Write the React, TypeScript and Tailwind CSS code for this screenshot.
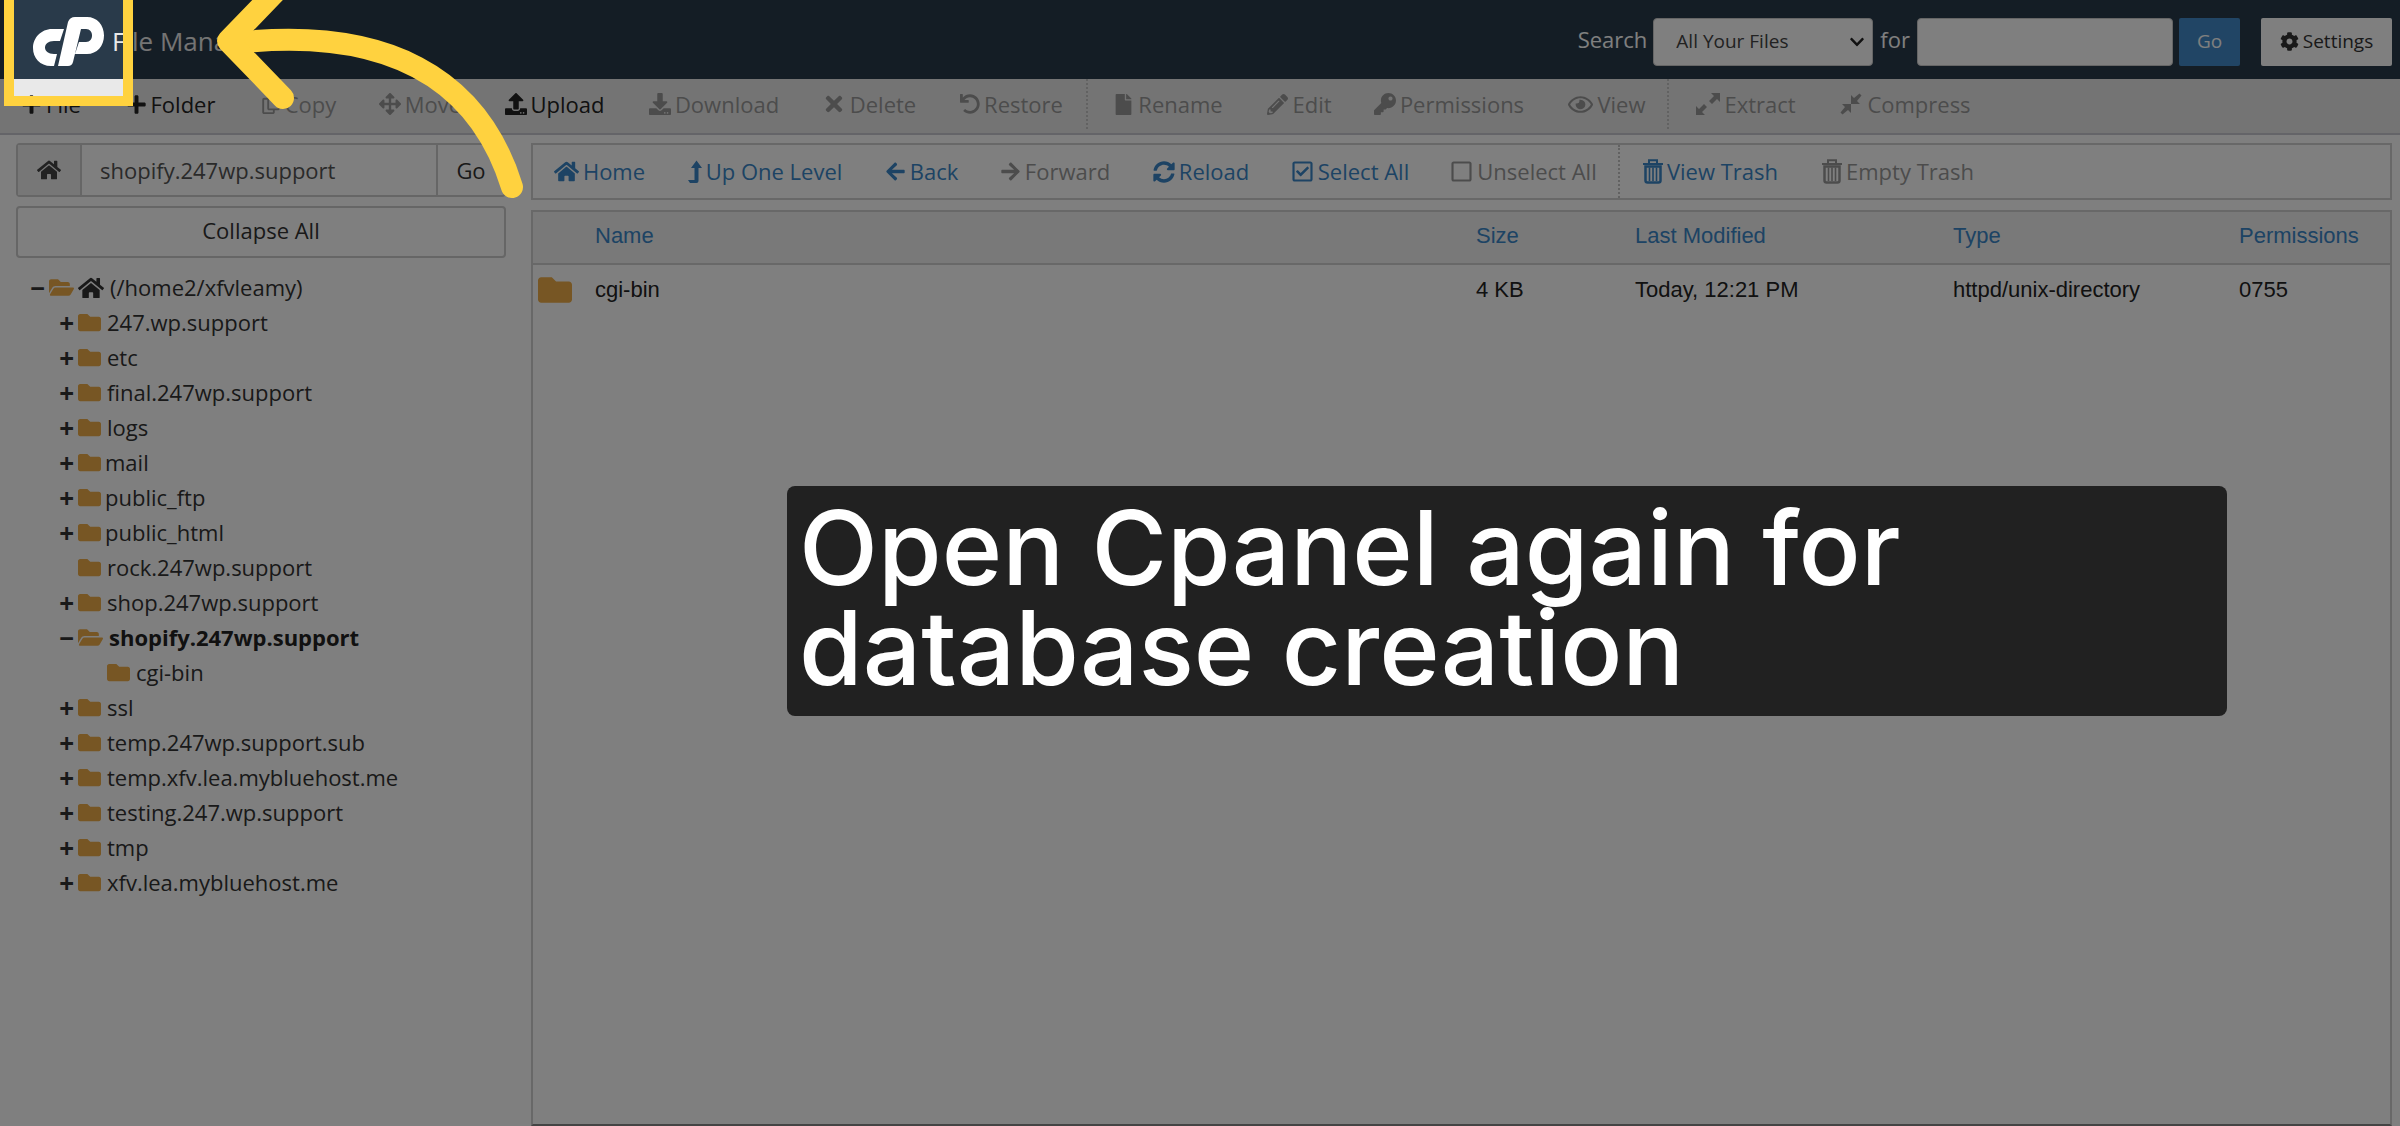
import React from 'react';
import {
  FaArrowLeft,
  FaArrowRight,
  FaArrowsAlt,
  FaChevronDown,
  FaCog,
  FaDownload,
  FaFile,
  FaFolder,
  FaFolderOpen,
  FaHome,
  FaKey,
  FaPencilAlt,
  FaPlus,
  FaRegCheckSquare,
  FaRegCopy,
  FaRegEye,
  FaRegSquare,
  FaSyncAlt,
  FaTimes,
  FaUndo,
  FaUpload,
} from 'react-icons/fa';

interface Action {
  label: string;
  icon: React.ReactNode;
  width: string;
  disabled?: boolean;
  divider?: boolean;
}

const TrashIcon = () => (
  <svg viewBox="0 0 20 25" className="h-[25px] w-5" fill="none" stroke="currentColor" aria-hidden="true">
    <path d="M0 5H20" strokeWidth="2" />
    <path d="M6 4V1.2H14V4" strokeWidth="2" />
    <path d="M2.5 7.5H17.5V21.5Q17.5 23.5 15.5 23.5H4.5Q2.5 23.5 2.5 21.5Z" strokeWidth="2.5" />
    <path d="M6.5 8.5V22M10 8.5V22M13.5 8.5V22" strokeWidth="1.6" />
  </svg>
);

const LevelUpIcon = () => (
  <svg viewBox="0 0 14 24" className="h-6 w-3.5" fill="currentColor" aria-hidden="true">
    <path d="M8.500 0.500L14 8H10.500V21Q10.500 23 8.500 23H2L0 20H6.500V8H3Z" />
  </svg>
);

const ExtractIcon = () => (
  <svg viewBox="0 0 24 24" className="size-6" fill="currentColor" aria-hidden="true">
    <path d="M15 1H24V10L21 7L16 12L13 9L18 4Z" />
    <path d="M9 23H0V14L3 17L8 12L11 15L6 20Z" />
  </svg>
);

const CompressIcon = () => (
  <svg viewBox="0 0 24 24" className="size-6" fill="currentColor" aria-hidden="true">
    <path d="M12 3V12H21L18 9L22.5 3.5L20.5 1.5L15 6Z" />
    <path d="M12 21V12H3L6 15L1.5 20.5L3.5 22.5L9 18Z" />
  </svg>
);

const fileActions: Action[] = [
  { label: 'File', icon: <FaPlus size={21} />, width: 'w-[102px]' },
  { label: 'Folder', icon: <FaPlus size={21} />, width: 'w-[137px]' },
  { label: 'Copy', icon: <FaRegCopy size={20} />, width: 'w-[119px]', disabled: true },
  { label: 'Move', icon: <FaArrowsAlt size={22} />, width: 'w-[124px]', disabled: true },
  { label: 'Upload', icon: <FaUpload size={22} />, width: 'w-[145px]' },
  { label: 'Download', icon: <FaDownload size={22} />, width: 'w-[174px]', disabled: true },
  { label: 'Delete', icon: <FaTimes size={24} />, width: 'w-[136px]', disabled: true },
  { label: 'Restore', icon: <FaUndo size={20} />, width: 'w-[149px]', disabled: true },
  { label: 'Rename', icon: <FaFile size={21} />, width: 'w-[162px]', disabled: true, divider: true },
  { label: 'Edit', icon: <FaPencilAlt size={21} />, width: 'w-[103px]', disabled: true },
  { label: 'Permissions', icon: <FaKey size={22} />, width: 'w-[196px]', disabled: true },
  { label: 'View', icon: <FaRegEye size={25} />, width: 'w-[120px]', disabled: true },
  { label: 'Extract', icon: <ExtractIcon />, width: 'w-[156px]', disabled: true, divider: true },
  { label: 'Compress', icon: <CompressIcon />, width: 'w-[164px]', disabled: true },
];

const navActions: Action[] = [
  { label: 'Home', icon: <FaHome size={25} />, width: 'w-[133px]' },
  { label: 'Up One Level', icon: <LevelUpIcon />, width: 'w-[198px]' },
  { label: 'Back', icon: <FaArrowLeft size={21} />, width: 'w-[115px]' },
  { label: 'Forward', icon: <FaArrowRight size={21} />, width: 'w-[152px]', disabled: true },
  { label: 'Reload', icon: <FaSyncAlt size={22} />, width: 'w-[140px]' },
  { label: 'Select All', icon: <FaRegCheckSquare size={23} />, width: 'w-[158px]' },
  { label: 'Unselect All', icon: <FaRegSquare size={23} />, width: 'w-[189px]', disabled: true },
  { label: 'View Trash', icon: <TrashIcon />, width: 'w-[183px]', divider: true },
  { label: 'Empty Trash', icon: <TrashIcon />, width: 'w-[194px]', disabled: true },
];

interface TreeNode {
  name: string;
  level: 1 | 2;
  state: 'closed' | 'open' | 'leaf';
}

const tree: TreeNode[] = [
  { name: '247.wp.support', level: 1, state: 'closed' },
  { name: 'etc', level: 1, state: 'closed' },
  { name: 'final.247wp.support', level: 1, state: 'closed' },
  { name: 'logs', level: 1, state: 'closed' },
  { name: 'mail', level: 1, state: 'closed' },
  { name: 'public_ftp', level: 1, state: 'closed' },
  { name: 'public_html', level: 1, state: 'closed' },
  { name: 'rock.247wp.support', level: 1, state: 'leaf' },
  { name: 'shop.247wp.support', level: 1, state: 'closed' },
  { name: 'shopify.247wp.support', level: 1, state: 'open' },
  { name: 'cgi-bin', level: 2, state: 'leaf' },
  { name: 'ssl', level: 1, state: 'closed' },
  { name: 'temp.247wp.support.sub', level: 1, state: 'closed' },
  { name: 'temp.xfv.lea.mybluehost.me', level: 1, state: 'closed' },
  { name: 'testing.247.wp.support', level: 1, state: 'closed' },
  { name: 'tmp', level: 1, state: 'closed' },
  { name: 'xfv.lea.mybluehost.me', level: 1, state: 'closed' },
];

const CpanelLogo = () => (
  <svg viewBox="32 16 74 52" className="h-[52px] w-[74px]" fill="#fff" aria-label="cPanel">
    <path d="M64 29L60 41H54C48 41 45 44 45 47.5S48 54 54 54H57L54 66H51C40 66 33 58 33 48S41 29 52 29Z" />
    <path d="M58 66L68 22Q70 17 75 17H87C97 17 104 25 104 35.5S97 54 87 54H75L79 42H86C90 42 92 39 92 35.5S90 29 86 29H81L73 62Q72 66 68 66Z" />
  </svg>
);

const Header = () => (
  <header className="flex h-[79px] items-center justify-between bg-[#293a4a] pt-1 pr-2 pl-8 text-white">
    <div className="flex items-center">
      <a href="#cpanel">
        <CpanelLogo />
      </a>
      <h1 className="ml-1.5 text-[26px] text-[#e8e8e8]">File Manager</h1>
    </div>
    <form className="flex items-center" onSubmit={(e) => e.preventDefault()}>
      <label htmlFor="scope" className="mr-1.5 pb-1 text-[22px]">Search</label>
      <div className="relative">
        <select
          id="scope"
          className="h-12 w-[220px] appearance-none rounded-sm border border-[#ccc] bg-white pl-[22px] text-[19px] text-[#444]"
        >
          <option>All Your Files</option>
        </select>
        <FaChevronDown size={16} className="pointer-events-none absolute top-4 right-2 text-[#222]" />
      </div>
      <label htmlFor="query" className="mx-[7px] pb-1 text-[22px]">for</label>
      <input id="query" type="text" className="h-12 w-64 rounded-sm border border-[#ccc] bg-white px-3 text-[19px] text-[#444]" />
      <button type="submit" className="ml-1.5 h-12 w-[61px] rounded-xs bg-[#428bca] text-[19px]">Go</button>
      <button
        type="button"
        className="ml-[21px] flex h-12 w-[131px] items-center justify-center gap-1 rounded-xs bg-white text-[19px] text-[#333]"
      >
        <FaCog size={19} />
        Settings
      </button>
    </form>
  </header>
);

const ActionButton = ({ action, color }: { action: Action; color: string }) => (
  <li className={`flex ${action.width} ${action.divider ? 'border-l-2 border-dotted border-[#c4c4c4]' : ''}`}>
    <button
      type="button"
      disabled={action.disabled}
      className={`flex w-full items-center justify-center whitespace-nowrap ${action.disabled ? 'text-[#999]' : color}`}
    >
      <span className="mr-1">{action.icon}</span>
      {action.label}
    </button>
  </li>
);

const toggleClass = 'mr-1 w-[31px] text-right text-[26px] leading-none font-bold';

const TreeRow = ({ node }: { node: TreeNode }) => (
  <li className={`flex h-[35px] items-center ${node.level === 2 ? 'pl-[72px]' : 'pl-[43px]'}`}>
    {node.state === 'leaf' && <span className="w-[35px]" />}
    {node.state !== 'leaf' && (
      <button type="button" className={toggleClass}>
        {node.state === 'open' ? '−' : '+'}
      </button>
    )}
    {node.state === 'open' ? (
      <FaFolderOpen size={25} className="text-[#eead48]" />
    ) : (
      <FaFolder size={23} className="text-[#eead48]" />
    )}
    <a
      href="#folder"
      className={`${/^(mail|public_)/.test(node.name) ? 'ml-1' : 'ml-1.5'} ${node.state === 'open' ? 'font-bold text-[#222]' : ''}`}
    >
      {node.name}
    </a>
  </li>
);

const Sidebar = () => (
  <aside className="w-[531px] shrink-0 pr-[25px]">
    <form className="ml-4 flex h-[54px] rounded border-2 border-[#ccc]" onSubmit={(e) => e.preventDefault()}>
      <button type="button" aria-label="Home directory" className="flex w-16 items-center justify-center border-r-2 border-[#ccc] bg-[#eee] text-[#444]">
        <FaHome size={24} />
      </button>
      <input
        type="text"
        aria-label="Path"
        defaultValue="shopify.247wp.support"
        className="min-w-0 flex-1 pl-[18px] text-[#555]"
      />
      <button type="submit" className="w-[68px] border-l-2 border-[#ccc]">Go</button>
    </form>
    <button type="button" className="mt-[9px] ml-4 block h-[52px] w-[490px] rounded border-2 border-[#ccc] pb-1">
      Collapse All
    </button>
    <ul className="mt-3">
      <li className="flex h-[35px] items-center pl-3.5">
        <button type="button" className={toggleClass}>−</button>
        <FaFolderOpen size={25} className="text-[#eead48]" />
        <FaHome size={26} className="ml-1 text-[#333]" />
        <a href="#root" className="ml-1.5">(/home2/xfvleamy)</a>
      </li>
      {tree.map((node) => (
        <TreeRow key={node.name} node={node} />
      ))}
    </ul>
  </aside>
);

const FileTable = () => (
  <div className="mt-2.5 flex-1 border-2 border-[#d0d0d0] border-b-[#888]">
    <table className="w-full table-fixed text-left font-['Liberation_Sans',sans-serif] text-[22px]">
      <thead>
        <tr className="h-[52px] border-b-2 border-[#d0d0d0] bg-[#f2f2f2] text-[#3a87c8]">
          <th className="w-[62px]"><span className="sr-only">Kind</span></th>
          <th className="pb-1 font-normal">Name</th>
          <th className="w-[159px] pb-1 font-normal">Size</th>
          <th className="w-[318px] pb-1 font-normal">Last Modified</th>
          <th className="w-[286px] pb-1 font-normal">Type</th>
          <th className="w-[151px] pb-1 font-normal">Permissions</th>
        </tr>
      </thead>
      <tbody>
        <tr className="h-[50px] text-[#222]">
          <td className="pl-[5px]"><FaFolder size={34} className="text-[#eead48]" /></td>
          <td>cgi-bin</td>
          <td>4 KB</td>
          <td>Today, 12:21 PM</td>
          <td>httpd/unix-directory</td>
          <td>0755</td>
        </tr>
      </tbody>
    </table>
  </div>
);

const Annotations = () => (
  <>
    {/* the spread shadow dims everything outside the frame */}
    <div className="pointer-events-none absolute -top-3 left-1 h-[118px] w-[129px] border-10 border-[#ffd23f] shadow-[0_0_0_4000px_rgba(0,0,0,0.5)]" />
    <svg
      className="pointer-events-none absolute top-0 left-[210px] h-[220px] w-[330px]"
      viewBox="210 0 330 220"
      fill="none"
      stroke="#ffd23f"
      strokeWidth="22"
      strokeLinecap="round"
      strokeLinejoin="round"
    >
      <path d="M512 187C478 77 386 26 234 43" />
      <path d="M283 -16L228 41L283 98" />
    </svg>
    <p className="absolute top-[486px] left-[787px] w-[1440px] rounded-lg bg-[#212121] px-3 pt-3 pb-[18px] font-['Inter',sans-serif] text-[103px] leading-[100px] font-medium text-white">
      Open Cpanel again for database creation
    </p>
  </>
);

const App: React.FC = () => {
  return (
    <div className="relative flex min-h-screen flex-col overflow-hidden bg-white font-['Open_Sans',sans-serif] text-[22px] text-[#333]">
      <Header />
      <nav aria-label="File actions" className="h-14 border-b-2 border-[#c8c8d0] bg-[#e9e9e9] pb-1">
        <ul className="flex h-full">
          {fileActions.map((action) => (
            <ActionButton key={action.label} action={action} color="text-[#222]" />
          ))}
        </ul>
      </nav>
      <div className="flex flex-1 pt-2">
        <Sidebar />
        <main className="flex flex-1 flex-col pr-2">
          <nav aria-label="Folder navigation" className="h-[57px] border-2 border-[#d0d0d0]">
            <ul className="flex h-full">
              {navActions.map((action) => (
                <ActionButton key={action.label} action={action} color="text-[#3a87c8]" />
              ))}
            </ul>
          </nav>
          <FileTable />
        </main>
      </div>
      <Annotations />
    </div>
  );
};

export default App;
